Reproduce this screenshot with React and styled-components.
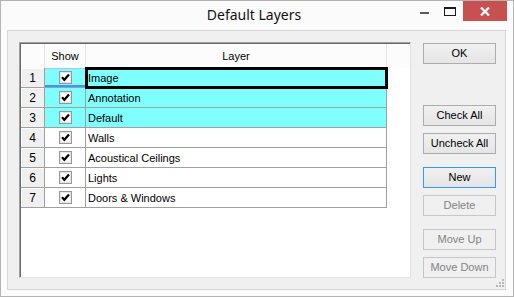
import React from "react";
import styled, { createGlobalStyle } from "styled-components";

const GlobalStyle = createGlobalStyle`
    html, body {
        margin: 0;
        padding: 0;
        background: #ffffff;
    }
    * {
        box-sizing: border-box;
    }
`;

const Window = styled.div`
    width: 514px;
    height: 297px;
    border: 1px solid #b4b4b4;
    background: #fbfbfb;
    display: flex;
    flex-direction: column;
    font-family: "Liberation Sans", Arial, sans-serif;
    font-size: 11px;
    color: #000;
`;

const TitleBar = styled.div`
    height: 29px;
    display: grid;
    grid-template-columns: 1fr auto 1fr;
    align-items: start;
    padding-right: 6px;
`;

const Title = styled.div`
    grid-column: 2;
    font-family: "Noto Sans", "Open Sans", sans-serif;
    font-size: 14px;
    line-height: 29px;
    color: #111;
    margin-top: -1px;
`;

const Controls = styled.div`
    grid-column: 3;
    justify-self: end;
    display: flex;
    align-items: flex-start;
`;

const CtlButton = styled.div`
    width: ${props => props.w}px;
    height: 20px;
    display: flex;
    align-items: center;
    justify-content: center;
    background: ${props => props.close ? "#c75050" : "transparent"};
`;

const Client = styled.div`
    position: relative;
    margin-left: 6px;
    width: 499px;
    height: 260px;
    border: 1px solid #d6d6d6;
    background: #f0f0f0;
    padding: 11px 0 0 11px;
    display: flex;
    align-items: flex-start;
`;

const Grid = styled.div`
    width: 392px;
    height: 236px;
    border: 1px solid;
    border-color: #a0a0a0 #e3e3e3 #e3e3e3 #a0a0a0;
    box-shadow: inset 1px 1px 0 #696969;
    padding: 1px 0 0 1px;
    background: #ffffff;
    display: flex;
    flex-direction: column;
    overflow: hidden;
`;

const HeaderRow = styled.div`
    display: grid;
    grid-template-columns: 24px 41px 301px 1fr;
    height: 24px;
    background: #fcfcfc;
`;

const HeaderCell = styled.div`
    border-right: 1px solid #e5e5e5;
    display: flex;
    align-items: center;
    justify-content: center;
    padding-bottom: 1px;
    &:last-child {
        border-right: none;
    }
`;

const Row = styled.div`
    display: grid;
    grid-template-columns: 24px 41px 301px;
    height: 20px;
`;

const RowHead = styled.div`
    background: #f0f0f0;
    border-right: 1px solid #a0a0a0;
    border-bottom: 1px solid #a0a0a0;
    box-shadow: inset 1px 1px 0 #ffffff;
    display: flex;
    align-items: center;
    justify-content: center;
    font-size: 12px;
`;

const Cell = styled.div`
    position: relative;
    background: ${props => props.hot ? "#80ffff" : "#ffffff"};
    border-right: 1px solid #a0a0a0;
    border-bottom: 1px solid #a0a0a0;
    display: flex;
    align-items: center;
    justify-content: ${props => props.center ? "center" : "flex-start"};
    padding-left: ${props => props.center ? 0 : 2}px;
    white-space: nowrap;
    ${props => props.current && `
        z-index: 1;
        outline: 3px solid #000;
        outline-offset: -2px;
    `}
    ${props => props.selected && `
        box-shadow: inset 0 -2px 0 #3399ff, inset 0 1px 0 #99ccff;
    `}
`;

const CheckBox = styled.div`
    width: 13px;
    height: 13px;
    border: 1px solid #979797;
    box-shadow: inset 0 0 0 1px #e6e6e6;
    background: #ffffff;
    display: flex;
    align-items: center;
    justify-content: center;
`;

const Side = styled.div`
    margin-left: 12px;
    display: flex;
    flex-direction: column;
`;

const Button = styled.div`
    width: 73px;
    height: 21px;
    margin-top: ${props => props.gap}px;
    display: flex;
    align-items: center;
    justify-content: center;
    font-size: 11px;
    border: 1px solid ${props => props.disabled ? "#c6c6c6" : props.focused ? "#3399ff" : "#acacac"};
    background: ${props => props.disabled ? "#f0f0f0" : "linear-gradient(#f0f0f0, #e5e5e5)"};
    color: ${props => props.disabled ? "#838383" : "#000"};
    padding-bottom: 1px;
`;

const Grip = styled.svg`
    position: absolute;
    right: 0;
    bottom: 1px;
`;

const layers = [
    { name: "Image", hot: true },
    { name: "Annotation", hot: true },
    { name: "Default", hot: true },
    { name: "Walls" },
    { name: "Acoustical Ceilings" },
    { name: "Lights" },
    { name: "Doors & Windows" },
];

const buttons = [
    { label: "OK", gap: 1 },
    { label: "Check All", gap: 41 },
    { label: "Uncheck All", gap: 7 },
    { label: "New", gap: 13, focused: true },
    { label: "Delete", gap: 7, disabled: true },
    { label: "Move Up", gap: 13, disabled: true },
    { label: "Move Down", gap: 7, disabled: true },
];

const Check = () => (
    <CheckBox>
        <svg width="9" height="9" viewBox="0 0 9 9">
            <polyline points="1,4.3 3.3,6.8 8,1.5" fill="none" stroke="#000" strokeWidth="2.2" />
        </svg>
    </CheckBox>
);

const App = () => (
    <>
        <GlobalStyle />
        <Window>
            <TitleBar>
                <Title>Default Layers</Title>
                <Controls>
                    <CtlButton w={26}>
                        <svg width="9" height="9" viewBox="0 0 9 9">
                            <rect x="0" y="5" width="9" height="2" fill="#5a5a5a" />
                        </svg>
                    </CtlButton>
                    <CtlButton w={26}>
                        <svg width="12" height="9" viewBox="0 0 12 9">
                            <rect x="0.5" y="0.5" width="11" height="8" fill="none" stroke="#1a1a1a" />
                            <rect x="0" y="0" width="12" height="2" fill="#1a1a1a" />
                        </svg>
                    </CtlButton>
                    <CtlButton w={44} close>
                        <svg width="10" height="9" viewBox="0 0 10 9">
                            <path d="M1 0.5 L9 8.5 M9 0.5 L1 8.5" stroke="#fff" strokeWidth="2.2" />
                        </svg>
                    </CtlButton>
                </Controls>
            </TitleBar>
            <Client>
                <Grid>
                    <HeaderRow>
                        <HeaderCell />
                        <HeaderCell>Show</HeaderCell>
                        <HeaderCell>Layer</HeaderCell>
                        <HeaderCell />
                    </HeaderRow>
                    {layers.map((layer, index) => (
                        <Row key={layer.name}>
                            <RowHead>{index + 1}</RowHead>
                            <Cell center hot={layer.hot} selected={index === 0}>
                                <Check />
                            </Cell>
                            <Cell hot={layer.hot} current={index === 0}>{layer.name}</Cell>
                        </Row>
                    ))}
                </Grid>
                <Side>
                    {buttons.map(b => (
                        <Button key={b.label} gap={b.gap} focused={b.focused} disabled={b.disabled}>
                            {b.label}
                        </Button>
                    ))}
                </Side>
                <Grip width="9" height="9" viewBox="0 0 9 9">
                    {[[6, 0], [3, 3], [6, 3], [0, 6], [3, 6], [6, 6]].map(([x, y]) => (
                        <rect key={`${x}-${y}`} x={x} y={y} width="2" height="2" fill="#b8b8b8" />
                    ))}
                </Grip>
            </Client>
        </Window>
    </>
);

export default App;
